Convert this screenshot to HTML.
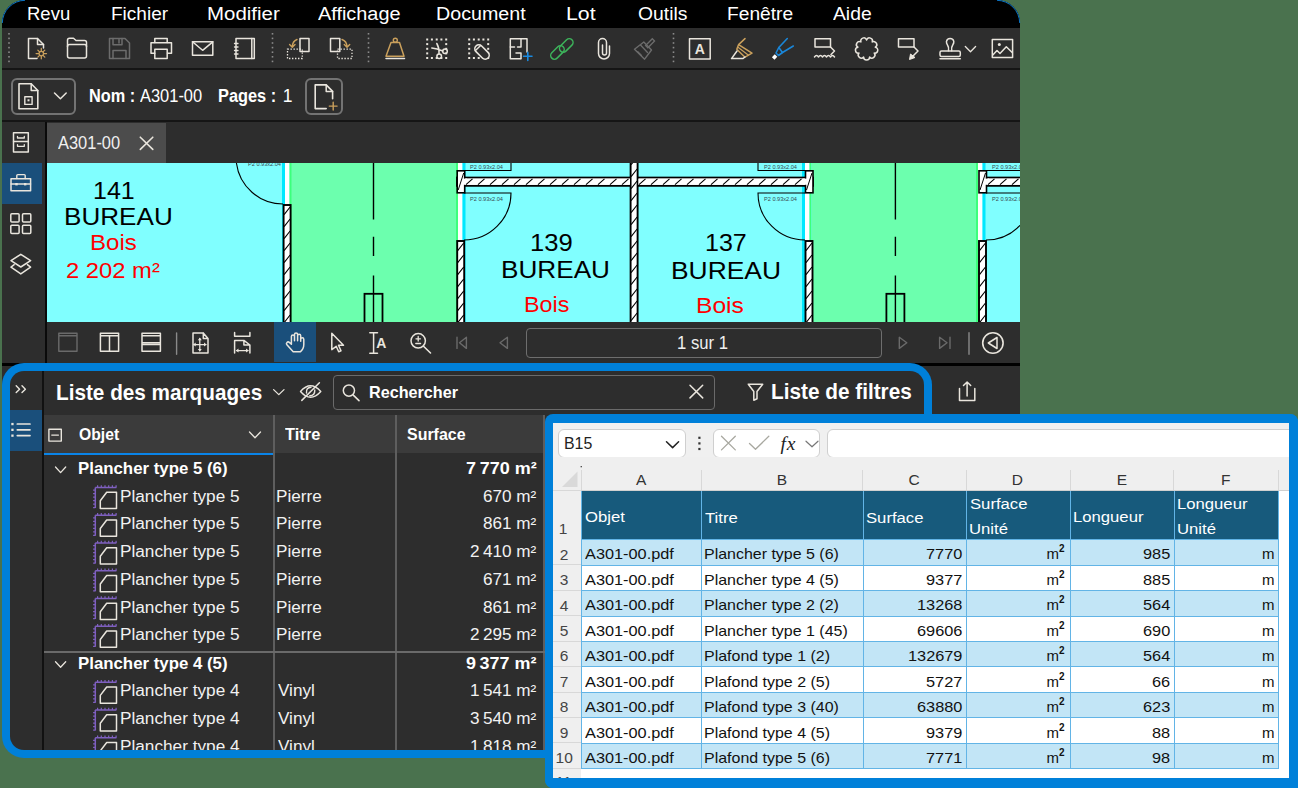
<!DOCTYPE html>
<html><head><meta charset="utf-8"><style>
html,body{margin:0;padding:0;}
body{width:1298px;height:788px;position:relative;overflow:hidden;background:#4a724e;font-family:"Liberation Sans",sans-serif;}
.r{position:absolute;}
.t{position:absolute;white-space:nowrap;line-height:1;}
svg{position:absolute;overflow:visible;}
</style></head><body>
<div class="r" style="left:2px;top:0;width:1018px;height:420px;background:#2d2d2d;border-radius:23px 23px 0 0;overflow:hidden">
<div class="r" style="left:0;top:0;width:1018px;height:28px;background:#000"></div>
</div>
<svg style="left:0;top:0" width="1298" height="40" viewBox="0 0 1298 40"><path d="M2.3 23A23 23 0 0 1 25 0.3M997 0.3A23 23 0 0 1 1019.7 23" fill="none" stroke="#0a7fdc" stroke-width="1" opacity="0.9"/></svg>
<div class="r" style="left:2px;top:68px;width:1018px;height:2px;background:#151515;"></div>
<div class="r" style="left:2px;top:120px;width:1018px;height:2px;background:#151515;"></div>
<div class="r" style="left:44.5px;top:122px;width:2.6px;height:241px;background:#0a0a0a;"></div>
<div class="r" style="left:47px;top:123px;width:119px;height:40px;background:#4c4c4c;"></div>
<div class="r" style="left:2px;top:163px;width:40px;height:41px;background:#1a4f7b;"></div>
<div class="r" style="left:274px;top:322px;width:42px;height:40px;background:#1a4f7b;"></div>
<div class="r" style="left:2px;top:363px;width:1018px;height:3px;background:#000;"></div>
<div class="t" id="t1" style="top:5.15px;font-size:18.00px;font-weight:400;color:#fff;left:27.17px;transform:scaleX(1.0272);transform-origin:0 0;">Revu</div>
<div class="t" id="t2" style="top:5.15px;font-size:18.00px;font-weight:400;color:#fff;left:110.94px;transform:scaleX(1.0563);transform-origin:0 0;">Fichier</div>
<div class="t" id="t3" style="top:5.15px;font-size:18.00px;font-weight:400;color:#fff;left:206.86px;transform:scaleX(1.1361);transform-origin:0 0;">Modifier</div>
<div class="t" id="t4" style="top:5.15px;font-size:18.00px;font-weight:400;color:#fff;left:318.00px;transform:scaleX(1.1042);transform-origin:0 0;">Affichage</div>
<div class="t" id="t5" style="top:5.15px;font-size:18.00px;font-weight:400;color:#fff;left:436.41px;transform:scaleX(1.0921);transform-origin:0 0;">Document</div>
<div class="t" id="t6" style="top:5.15px;font-size:18.00px;font-weight:400;color:#fff;left:566.42px;transform:scaleX(1.1823);transform-origin:0 0;">Lot</div>
<div class="t" id="t7" style="top:5.15px;font-size:18.00px;font-weight:400;color:#fff;left:638.00px;transform:scaleX(1.0737);transform-origin:0 0;">Outils</div>
<div class="t" id="t8" style="top:5.15px;font-size:18.00px;font-weight:400;color:#fff;left:726.93px;transform:scaleX(1.0652);transform-origin:0 0;">Fenêtre</div>
<div class="t" id="t9" style="top:5.15px;font-size:18.00px;font-weight:400;color:#fff;left:833.40px;transform:scaleX(1.0718);transform-origin:0 0;">Aide</div>
<div class="r" style="left:11px;top:78px;width:62px;height:35px;border:2px solid #737373;border-radius:6px;box-sizing:border-box;width:64.5px;height:37px"></div>
<div class="r" style="left:305px;top:78px;width:38px;height:36.5px;border:2px solid #737373;border-radius:6px;box-sizing:border-box"></div>
<div class="t" id="t10" style="top:88.38px;font-size:17.50px;font-weight:700;color:#fff;left:89.07px;transform:scaleX(0.9319);transform-origin:0 0;">Nom :</div>
<div class="t" id="t11" style="top:88.38px;font-size:17.50px;font-weight:400;color:#fff;left:140.30px;transform:scaleX(0.9393);transform-origin:0 0;">A301-00</div>
<div class="t" id="t12" style="top:88.38px;font-size:17.50px;font-weight:700;color:#fff;left:218.06px;transform:scaleX(0.9351);transform-origin:0 0;">Pages :</div>
<div class="t" id="t13" style="top:88.38px;font-size:17.50px;font-weight:400;color:#fff;left:282.80px;">1</div>
<div class="t" id="t14" style="top:134.78px;font-size:17.50px;font-weight:400;color:#f0f0f0;left:58.30px;transform:scaleX(0.9393);transform-origin:0 0;">A301-00</div>
<div class="r" style="left:526px;top:328px;width:356px;height:30px;border:1.6px solid #6e6e6e;border-radius:4px;box-sizing:border-box"></div>
<div class="t" id="t15" style="top:334.78px;font-size:17.50px;font-weight:400;color:#f0f0f0;left:677.25px;transform:scaleX(0.9523);transform-origin:0 0;">1 sur 1</div>
<svg style="left:0;top:28px" width="1020" height="40" viewBox="0 28 1020 40"><rect x="8.2" y="33.0" width="1.6" height="1.6" fill="#8a8a8a"/><rect x="8.2" y="37.6" width="1.6" height="1.6" fill="#8a8a8a"/><rect x="8.2" y="42.2" width="1.6" height="1.6" fill="#8a8a8a"/><rect x="8.2" y="46.8" width="1.6" height="1.6" fill="#8a8a8a"/><rect x="8.2" y="51.4" width="1.6" height="1.6" fill="#8a8a8a"/><rect x="8.2" y="56.0" width="1.6" height="1.6" fill="#8a8a8a"/><rect x="8.2" y="60.6" width="1.6" height="1.6" fill="#8a8a8a"/><rect x="271.7" y="33.0" width="1.6" height="1.6" fill="#8a8a8a"/><rect x="271.7" y="37.6" width="1.6" height="1.6" fill="#8a8a8a"/><rect x="271.7" y="42.2" width="1.6" height="1.6" fill="#8a8a8a"/><rect x="271.7" y="46.8" width="1.6" height="1.6" fill="#8a8a8a"/><rect x="271.7" y="51.4" width="1.6" height="1.6" fill="#8a8a8a"/><rect x="271.7" y="56.0" width="1.6" height="1.6" fill="#8a8a8a"/><rect x="271.7" y="60.6" width="1.6" height="1.6" fill="#8a8a8a"/><rect x="367.7" y="33.0" width="1.6" height="1.6" fill="#8a8a8a"/><rect x="367.7" y="37.6" width="1.6" height="1.6" fill="#8a8a8a"/><rect x="367.7" y="42.2" width="1.6" height="1.6" fill="#8a8a8a"/><rect x="367.7" y="46.8" width="1.6" height="1.6" fill="#8a8a8a"/><rect x="367.7" y="51.4" width="1.6" height="1.6" fill="#8a8a8a"/><rect x="367.7" y="56.0" width="1.6" height="1.6" fill="#8a8a8a"/><rect x="367.7" y="60.6" width="1.6" height="1.6" fill="#8a8a8a"/><rect x="672.7" y="33.0" width="1.6" height="1.6" fill="#8a8a8a"/><rect x="672.7" y="37.6" width="1.6" height="1.6" fill="#8a8a8a"/><rect x="672.7" y="42.2" width="1.6" height="1.6" fill="#8a8a8a"/><rect x="672.7" y="46.8" width="1.6" height="1.6" fill="#8a8a8a"/><rect x="672.7" y="51.4" width="1.6" height="1.6" fill="#8a8a8a"/><rect x="672.7" y="56.0" width="1.6" height="1.6" fill="#8a8a8a"/><rect x="672.7" y="60.6" width="1.6" height="1.6" fill="#8a8a8a"/><path d="M37 58.5H28.5V38.5H37.5L43.5 44.5V48" fill="none" stroke="#e9e5dd" stroke-width="1.5" stroke-linejoin="round" stroke-linecap="round" /><path d="M37.5 38.5V44.5H43.5" fill="none" stroke="#e9e5dd" stroke-width="1.5" stroke-linejoin="round" stroke-linecap="round" /><path d="M41.3 48.4V58.8M36.1 53.6H46.5M37.8 50.1L44.8 57.1M37.8 57.1L44.8 50.1" fill="none" stroke="#caa05c" stroke-width="1.3" stroke-linejoin="round" stroke-linecap="round" /><circle cx="41.3" cy="53.6" r="2.2" fill="#2d2d2d" stroke="#caa05c" stroke-width="1.2"/><path d="M69.5 58H84.5Q86.5 58 86.5 56V42.5Q86.5 40.5 84.5 40.5H76L73.5 38.3H69.5Q67.5 38.3 67.5 40.3V56Q67.5 58 69.5 58Z" fill="none" stroke="#e9e5dd" stroke-width="1.5" stroke-linejoin="round" stroke-linecap="round" /><path d="M67.5 46.5Q67.5 44.5 69.5 44.5H84.5Q86.5 44.5 86.5 46.5" fill="none" stroke="#e9e5dd" stroke-width="1.5" stroke-linejoin="round" stroke-linecap="round" /><path d="M109.5 58.5V38.5H125L129.5 43V58.5Z" fill="none" stroke="#6c6c6c" stroke-width="1.5" stroke-linejoin="round" stroke-linecap="round" /><path d="M113 38.5V44.8H122V38.5M119 39.5V43M113 58.5V50.5H126V58.5" fill="none" stroke="#6c6c6c" stroke-width="1.5" stroke-linejoin="round" stroke-linecap="round" /><path d="M154.8 42.5V38.5H167.2V42.5" fill="none" stroke="#e9e5dd" stroke-width="1.5" stroke-linejoin="round" stroke-linecap="round" /><path d="M154.8 53.2H151V42.8H171.5V53.2H167.5" fill="none" stroke="#e9e5dd" stroke-width="1.5" stroke-linejoin="round" stroke-linecap="round" /><path d="M154.8 49.3H167.2V58.5H154.8Z" fill="none" stroke="#e9e5dd" stroke-width="1.5" stroke-linejoin="round" stroke-linecap="round" /><path d="M192.5 41.8H212.8V55.3H192.5Z" fill="none" stroke="#e9e5dd" stroke-width="1.5" stroke-linejoin="round" stroke-linecap="round" /><path d="M192.5 41.8L202.6 50.3L212.8 41.8" fill="none" stroke="#e9e5dd" stroke-width="1.5" stroke-linejoin="round" stroke-linecap="round" /><path d="M236 38.5H254.3V58.5H236Z" fill="none" stroke="#e9e5dd" stroke-width="1.5" stroke-linejoin="round" stroke-linecap="round" /><path d="M251.8 38.5V58.5" fill="none" stroke="#e9e5dd" stroke-width="1.5" stroke-linejoin="round" stroke-linecap="round" /><path d="M234.5 43.5H238" fill="none" stroke="#e9e5dd" stroke-width="1.3" stroke-linejoin="round" stroke-linecap="round" /><path d="M234.5 47.0H238" fill="none" stroke="#e9e5dd" stroke-width="1.3" stroke-linejoin="round" stroke-linecap="round" /><path d="M234.5 50.5H238" fill="none" stroke="#e9e5dd" stroke-width="1.3" stroke-linejoin="round" stroke-linecap="round" /><path d="M234.5 54.0H238" fill="none" stroke="#e9e5dd" stroke-width="1.3" stroke-linejoin="round" stroke-linecap="round" /><path d="M300 38.5H309V51.5H300Z" fill="none" stroke="#e9e5dd" stroke-width="1.5" stroke-linejoin="round" stroke-linecap="round" /><path d="M287.5 49.2H302.3V58.5H287.5Z" fill="none" stroke="#e9e5dd" stroke-width="1.3" stroke-dasharray="1.4 1.6"/><path d="M297 39.5Q292.5 41 292.3 47M289.6 44.5L292.3 47.3L295 44.5" fill="none" stroke="#caa05c" stroke-width="1.4" stroke-linejoin="round" stroke-linecap="round" /><path d="M330.5 38.5H339.8V51.5H330.5Z" fill="none" stroke="#e9e5dd" stroke-width="1.5" stroke-linejoin="round" stroke-linecap="round" /><path d="M337.5 49.2H352V58.5H337.5Z" fill="none" stroke="#e9e5dd" stroke-width="1.3" stroke-dasharray="1.4 1.6"/><path d="M342 39.5Q346.8 41 347 47M344.3 44.5L347 47.3L349.7 44.5" fill="none" stroke="#caa05c" stroke-width="1.4" stroke-linejoin="round" stroke-linecap="round" /><path d="M391 42.5H399.5L404 56.3H386Z" fill="none" stroke="#caa05c" stroke-width="1.5" stroke-linejoin="round" stroke-linecap="round" /><circle cx="395.3" cy="40.3" r="2" fill="none" stroke="#caa05c" stroke-width="1.4"/><path d="M386 58.6H404.5" fill="none" stroke="#e9e5dd" stroke-width="1.5" stroke-linejoin="round" stroke-linecap="round" /><rect x="426.2" y="38.5" width="2" height="2" fill="#e9e5dd"/><rect x="426.2" y="57.0" width="2" height="2" fill="#e9e5dd"/><rect x="430.9" y="38.5" width="2" height="2" fill="#e9e5dd"/><rect x="430.9" y="57.0" width="2" height="2" fill="#e9e5dd"/><rect x="435.7" y="38.5" width="2" height="2" fill="#e9e5dd"/><rect x="435.7" y="57.0" width="2" height="2" fill="#e9e5dd"/><rect x="440.4" y="38.5" width="2" height="2" fill="#e9e5dd"/><rect x="440.4" y="57.0" width="2" height="2" fill="#e9e5dd"/><rect x="445.2" y="38.5" width="2" height="2" fill="#e9e5dd"/><rect x="445.2" y="57.0" width="2" height="2" fill="#e9e5dd"/><rect x="426.2" y="43.1" width="2" height="2" fill="#e9e5dd"/><rect x="445.2" y="43.1" width="2" height="2" fill="#e9e5dd"/><rect x="426.2" y="47.8" width="2" height="2" fill="#e9e5dd"/><rect x="445.2" y="47.8" width="2" height="2" fill="#e9e5dd"/><rect x="426.2" y="52.4" width="2" height="2" fill="#e9e5dd"/><rect x="445.2" y="52.4" width="2" height="2" fill="#e9e5dd"/><path d="M436.8 43.5Q439.5 48 439 53.8M431.8 48Q437 48.5 442.8 51" fill="none" stroke="#e9e5dd" stroke-width="1.5" stroke-linejoin="round" stroke-linecap="round" /><circle cx="439.2" cy="56.3" r="2.3" fill="none" stroke="#e9e5dd" stroke-width="1.5"/><circle cx="445" cy="51.3" r="2.3" fill="none" stroke="#e9e5dd" stroke-width="1.5"/><rect x="468.2" y="38.5" width="2" height="2" fill="#e9e5dd"/><rect x="468.2" y="57.0" width="2" height="2" fill="#e9e5dd"/><rect x="472.9" y="38.5" width="2" height="2" fill="#e9e5dd"/><rect x="472.9" y="57.0" width="2" height="2" fill="#e9e5dd"/><rect x="477.7" y="38.5" width="2" height="2" fill="#e9e5dd"/><rect x="477.7" y="57.0" width="2" height="2" fill="#e9e5dd"/><rect x="482.4" y="38.5" width="2" height="2" fill="#e9e5dd"/><rect x="482.4" y="57.0" width="2" height="2" fill="#e9e5dd"/><rect x="487.2" y="38.5" width="2" height="2" fill="#e9e5dd"/><rect x="487.2" y="57.0" width="2" height="2" fill="#e9e5dd"/><rect x="468.2" y="43.1" width="2" height="2" fill="#e9e5dd"/><rect x="487.2" y="43.1" width="2" height="2" fill="#e9e5dd"/><rect x="468.2" y="47.8" width="2" height="2" fill="#e9e5dd"/><rect x="487.2" y="47.8" width="2" height="2" fill="#e9e5dd"/><rect x="468.2" y="52.4" width="2" height="2" fill="#e9e5dd"/><rect x="487.2" y="52.4" width="2" height="2" fill="#e9e5dd"/><rect x="473.5" y="48" width="17" height="8" rx="4" transform="rotate(45 482 52)" fill="#2d2d2d" stroke="#e9e5dd" stroke-width="1.6"/><path d="M475.2 50.8L480.6 45.4" fill="none" stroke="#e9e5dd" stroke-width="1.4" stroke-linejoin="round" stroke-linecap="round" /><path d="M527 52V38.8H510.3V58.8H520.5" fill="none" stroke="#e9e5dd" stroke-width="1.5" stroke-linejoin="round" stroke-linecap="round" /><path d="M510.3 47H514.5M517.5 47H521V38.8M516 53H521M521 53V58.8" fill="none" stroke="#e9e5dd" stroke-width="1.5" stroke-linejoin="round" stroke-linecap="round" /><path d="M527.8 52.2V60.5M523.6 56.3H532" fill="none" stroke="#1a8ae0" stroke-width="1.6" stroke-linejoin="round" stroke-linecap="round" /><rect x="562.5" y="37.5" width="7.5" height="16" rx="3.75" transform="rotate(45 566.3 45.5)" fill="none" stroke="#3db35b" stroke-width="1.5"/><rect x="553.7" y="44.5" width="7.5" height="16" rx="3.75" transform="rotate(45 557.5 52.5)" fill="none" stroke="#3db35b" stroke-width="1.5"/><path d="M609.5 46V53.5A5.5 5.5 0 0 1 598.5 53.5V42.5A4 4 0 0 1 606.5 42.5V53A2 2 0 0 1 602.5 53V45" fill="none" stroke="#e9e5dd" stroke-width="1.5" stroke-linejoin="round" stroke-linecap="round" /><path d="M634.5 49.2L643.8 42L651.5 50L644.6 59.2Z" fill="none" stroke="#6c6c6c" stroke-width="1.4" stroke-linejoin="round" stroke-linecap="round" /><path d="M640.5 45L647.5 52.5M637.8 51.8L641.5 55.5" fill="none" stroke="#6c6c6c" stroke-width="1.3" stroke-linejoin="round" stroke-linecap="round" /><rect x="648.5" y="38.5" width="3.2" height="9.5" transform="rotate(45 650.1 43.2)" fill="none" stroke="#6c6c6c" stroke-width="1.3"/><path d="M689.5 38.8H710.2V59H689.5Z" fill="none" stroke="#e9e5dd" stroke-width="1.5" stroke-linejoin="round" stroke-linecap="round" /><text x="699.8" y="53.6" font-size="14" font-family="Liberation Sans" font-weight="700" fill="#e9e5dd" text-anchor="middle">A</text><path d="M745 38.6L738.6 44.6L752 53.2L745 57.2L736.8 49.2L738.6 44.6" fill="none" stroke="#caa05c" stroke-width="1.5" stroke-linejoin="round" stroke-linecap="round" /><path d="M738 47.2L748.5 55.2" fill="none" stroke="#caa05c" stroke-width="1.2" stroke-linejoin="round" stroke-linecap="round" /><path d="M737 51L731.5 58.6H742.8L745 57" fill="none" stroke="#e9e5dd" stroke-width="1.5" stroke-linejoin="round" stroke-linecap="round" /><path d="M787.3 38.5L778.8 47.5L782.5 52.5L793.3 46" fill="none" stroke="#1a86d8" stroke-width="1.6" stroke-linejoin="round" stroke-linecap="round" /><path d="M778.8 47.5L776 53L778.5 55.5L782.5 52.5" fill="none" stroke="#1a86d8" stroke-width="1.6" stroke-linejoin="round" stroke-linecap="round" /><rect x="772.8" y="55" width="3.6" height="4" transform="rotate(45 774.6 57)" fill="#fff"/><path d="M815 38.8H830.5V47H815Z" fill="none" stroke="#e9e5dd" stroke-width="1.5" stroke-linejoin="round" stroke-linecap="round" /><path d="M830.5 47L834.5 51L831 54.5" fill="none" stroke="#e9e5dd" stroke-width="1.5" stroke-linejoin="round" stroke-linecap="round" /><path d="M814.5 57Q816.5 54 818.5 57Q820.5 54 822.5 57Q824.5 54 826.5 57Q828.5 54 830.5 57Q832.5 54 834.5 57" fill="none" stroke="#e9e5dd" stroke-width="1.5" stroke-linejoin="round" stroke-linecap="round" /><path d="M866.60 39.90A2.9 2.9 0 0 1 872.26 41.96A2.9 2.9 0 0 1 875.27 47.17A2.9 2.9 0 0 1 874.22 53.10A2.9 2.9 0 0 1 869.61 56.97A2.9 2.9 0 0 1 863.59 56.97A2.9 2.9 0 0 1 858.98 53.10A2.9 2.9 0 0 1 857.93 47.17A2.9 2.9 0 0 1 860.94 41.96A2.9 2.9 0 0 1 866.60 39.90" fill="none" stroke="#e9e5dd" stroke-width="1.5" stroke-linejoin="round" stroke-linecap="round" /><path d="M898.5 38.8H914V47H898.5Z" fill="none" stroke="#e9e5dd" stroke-width="1.5" stroke-linejoin="round" stroke-linecap="round" /><path d="M914 47L918 51L911 58" fill="none" stroke="#e9e5dd" stroke-width="1.5" stroke-linejoin="round" stroke-linecap="round" /><path d="M909.5 59.5L910.5 54L915 57.5Z" fill="#e9e5dd" stroke="#e9e5dd" stroke-width="1"/><path d="M948.5 50.8Q949 47 947.5 45Q946.2 43 946.5 41.5Q947 38.5 950.1 38.5Q953.3 38.5 953.8 41.5Q954 43 952.7 45Q951.2 47 951.7 50.8" fill="none" stroke="#e9e5dd" stroke-width="1.5" stroke-linejoin="round" stroke-linecap="round" /><path d="M941.5 51H958.8Q960.3 51 960.3 52.5V55Q960.3 56.5 958.8 56.5H941.5Q940 56.5 940 55V52.5Q940 51 941.5 51Z" fill="none" stroke="#e9e5dd" stroke-width="1.5" stroke-linejoin="round" stroke-linecap="round" /><path d="M940 58.8H960.3" fill="none" stroke="#e9e5dd" stroke-width="1.5" stroke-linejoin="round" stroke-linecap="round" /><path d="M965.3 46.5L970.5 51.8L975.6 46.5" fill="none" stroke="#e9e5dd" stroke-width="1.3" stroke-linejoin="round" stroke-linecap="round" /><path d="M992.3 39.5H1012.6V57.6H992.3Z" fill="none" stroke="#e9e5dd" stroke-width="1.5" stroke-linejoin="round" stroke-linecap="round" /><circle cx="999.3" cy="44.6" r="1.5" fill="#e9e5dd"/><path d="M992.8 55L997 50.5L1000 53.5L1006.3 46.8L1012.2 52.5" fill="none" stroke="#e9e5dd" stroke-width="1.5" stroke-linejoin="round" stroke-linecap="round" /></svg>
<svg style="left:47px;top:163px;overflow:hidden" width="973" height="159" viewBox="47 163 973 159"><rect x="47" y="163" width="973" height="159" fill="#80ffff"/><rect x="291" y="163" width="166" height="159" fill="#6cffae"/><rect x="812" y="163" width="166" height="159" fill="#6cffae"/><rect x="282.0" y="163" width="3.0" height="159" fill="#00e8ff"/><rect x="285.0" y="163" width="4.5" height="159" fill="#ffffff"/><rect x="289.5" y="163" width="2.0" height="159" fill="#3cff7c"/><rect x="456.0" y="163" width="2.0" height="159" fill="#3cff7c"/><rect x="458.0" y="163" width="4.5" height="159" fill="#ffffff"/><rect x="462.5" y="163" width="3.0" height="159" fill="#00e8ff"/><rect x="802.0" y="163" width="3.0" height="159" fill="#00e8ff"/><rect x="805.0" y="163" width="4.5" height="159" fill="#ffffff"/><rect x="809.5" y="163" width="2.0" height="159" fill="#3cff7c"/><rect x="976.0" y="163" width="2.0" height="159" fill="#3cff7c"/><rect x="978.0" y="163" width="4.5" height="159" fill="#ffffff"/><rect x="982.5" y="163" width="3.0" height="159" fill="#00e8ff"/><rect x="457.0" y="177.6" width="356.0" height="8.2" fill="#fff" stroke="#000" stroke-width="1.9"/><path d="" stroke="#000" stroke-width="1.1" fill="none"/><rect x="987.0" y="177.6" width="40.0" height="8.2" fill="#fff" stroke="#000" stroke-width="1.9"/><path d="" stroke="#000" stroke-width="1.1" fill="none"/><rect x="283.6" y="205.0" width="7.0" height="130.0" fill="#fff" stroke="#000" stroke-width="1.9"/><path d="M284.1 214.7L290.1 207.0M284.1 226.7L290.1 219.0M284.1 238.7L290.1 231.0M284.1 250.7L290.1 243.0M284.1 262.7L290.1 255.0M284.1 274.7L290.1 267.0M284.1 286.7L290.1 279.0M284.1 298.7L290.1 291.0M284.1 310.7L290.1 303.0M284.1 322.7L290.1 315.0M284.1 334.7L290.1 327.0" stroke="#000" stroke-width="1.1" fill="none"/><rect x="457.2" y="241.0" width="7.0" height="100.0" fill="#fff" stroke="#000" stroke-width="1.9"/><path d="M457.7 250.7L463.7 243.0M457.7 262.7L463.7 255.0M457.7 274.7L463.7 267.0M457.7 286.7L463.7 279.0M457.7 298.7L463.7 291.0M457.7 310.7L463.7 303.0M457.7 322.7L463.7 315.0M457.7 334.7L463.7 327.0M457.7 346.7L463.7 339.0" stroke="#000" stroke-width="1.1" fill="none"/><rect x="630.6" y="155.0" width="7.0" height="180.0" fill="#fff" stroke="#000" stroke-width="1.9"/><path d="M631.1 164.7L637.1 157.0M631.1 176.7L637.1 169.0M631.1 188.7L637.1 181.0M631.1 200.7L637.1 193.0M631.1 212.7L637.1 205.0M631.1 224.7L637.1 217.0M631.1 236.7L637.1 229.0M631.1 248.7L637.1 241.0M631.1 260.7L637.1 253.0M631.1 272.7L637.1 265.0M631.1 284.7L637.1 277.0M631.1 296.7L637.1 289.0M631.1 308.7L637.1 301.0M631.1 320.7L637.1 313.0M631.1 332.7L637.1 325.0" stroke="#000" stroke-width="1.1" fill="none"/><rect x="805.5" y="241.0" width="7.0" height="100.0" fill="#fff" stroke="#000" stroke-width="1.9"/><path d="M806.0 250.7L812.0 243.0M806.0 262.7L812.0 255.0M806.0 274.7L812.0 267.0M806.0 286.7L812.0 279.0M806.0 298.7L812.0 291.0M806.0 310.7L812.0 303.0M806.0 322.7L812.0 315.0M806.0 334.7L812.0 327.0M806.0 346.7L812.0 339.0" stroke="#000" stroke-width="1.1" fill="none"/><rect x="979.0" y="241.0" width="7.0" height="100.0" fill="#fff" stroke="#000" stroke-width="1.9"/><path d="M979.5 250.7L985.5 243.0M979.5 262.7L985.5 255.0M979.5 274.7L985.5 267.0M979.5 286.7L985.5 279.0M979.5 298.7L985.5 291.0M979.5 310.7L985.5 303.0M979.5 322.7L985.5 315.0M979.5 334.7L985.5 327.0M979.5 346.7L985.5 339.0" stroke="#000" stroke-width="1.1" fill="none"/><rect x="457.2" y="170.8" width="7.5" height="22" fill="#fff" stroke="#000" stroke-width="1.6"/><path d="M463.7 173L458.2 190" stroke="#000" stroke-width="1"/><rect x="805.5" y="170.8" width="7.5" height="22" fill="#fff" stroke="#000" stroke-width="1.6"/><path d="M812.0 173L806.5 190" stroke="#000" stroke-width="1"/><rect x="979.0" y="170.8" width="7.5" height="22" fill="#fff" stroke="#000" stroke-width="1.6"/><path d="M985.5 173L980.0 190" stroke="#000" stroke-width="1"/><rect x="465" y="178.6" width="165" height="6.2" fill="#fff"/><rect x="638.5" y="178.6" width="166.5" height="6.2" fill="#fff"/><rect x="987" y="178.6" width="40" height="6.2" fill="#fff"/><rect x="463" y="178.6" width="4" height="6.2" fill="#fff"/><rect x="803" y="178.6" width="4" height="6.2" fill="#fff"/><rect x="985" y="178.6" width="4" height="6.2" fill="#fff"/><path d="M466.0 184.6L472.5 178.8M478.0 184.6L484.5 178.8M490.0 184.6L496.5 178.8M502.0 184.6L508.5 178.8M514.0 184.6L520.5 178.8M526.0 184.6L532.5 178.8M538.0 184.6L544.5 178.8M550.0 184.6L556.5 178.8M562.0 184.6L568.5 178.8M574.0 184.6L580.5 178.8M586.0 184.6L592.5 178.8M598.0 184.6L604.5 178.8M610.0 184.6L616.5 178.8M622.0 184.6L628.5 178.8M639.0 184.6L645.5 178.8M651.0 184.6L657.5 178.8M663.0 184.6L669.5 178.8M675.0 184.6L681.5 178.8M687.0 184.6L693.5 178.8M699.0 184.6L705.5 178.8M711.0 184.6L717.5 178.8M723.0 184.6L729.5 178.8M735.0 184.6L741.5 178.8M747.0 184.6L753.5 178.8M759.0 184.6L765.5 178.8M771.0 184.6L777.5 178.8M783.0 184.6L789.5 178.8M795.0 184.6L801.5 178.8M988.0 184.6L994.5 178.8M1000.0 184.6L1006.5 178.8M1012.0 184.6L1018.5 178.8" stroke="#000" stroke-width="1.1"/><path d="M236.4 163A47 47 0 0 0 283 204" fill="none" stroke="#000" stroke-width="1.1"/><path d="M464 193H511A47 47 0 0 1 464 240" fill="none" stroke="#000" stroke-width="1.1"/><path d="M805 193H758A47 47 0 0 0 805 240" fill="none" stroke="#000" stroke-width="1.1"/><path d="M986 193H1033A47 47 0 0 1 986 240" fill="none" stroke="#000" stroke-width="1.1"/><path d="M464 170.5H511V163M805 170.5H758V163M986 170.5H1030" fill="none" stroke="#000" stroke-width="1.1"/><text x="470" y="169" font-size="5.6" fill="#3a4a50" font-family="Liberation Sans">P2 0.93x2.04</text><text x="470" y="201" font-size="5.6" fill="#3a4a50" font-family="Liberation Sans">P2 0.93x2.04</text><text x="764" y="169" font-size="5.6" fill="#3a4a50" font-family="Liberation Sans">P2 0.93x2.04</text><text x="764" y="201" font-size="5.6" fill="#3a4a50" font-family="Liberation Sans">P2 0.93x2.04</text><text x="992" y="169" font-size="5.6" fill="#3a4a50" font-family="Liberation Sans">P2 0.93x2.04</text><text x="992" y="201" font-size="5.6" fill="#3a4a50" font-family="Liberation Sans">P2 0.93x2.04</text><text x="248" y="166" font-size="5.6" fill="#3a4a50" font-family="Liberation Sans">P2 0.93x2.04</text><path d="M373.5 163V219.5M373.5 236.8V256M373.5 275.5V322" stroke="#000" stroke-width="1.4"/><rect x="364.5" y="293.8" width="18" height="30" fill="none" stroke="#000" stroke-width="1.8"/><path d="M895.4 163V219.5M895.4 236.8V256M895.4 275.5V322" stroke="#000" stroke-width="1.4"/><rect x="886.4" y="293.8" width="18" height="30" fill="none" stroke="#000" stroke-width="1.8"/></svg>
<div class="t" id="t16" style="top:178.75px;font-size:24.50px;font-weight:400;color:#000;left:93.38px;transform:scaleX(1.0191);transform-origin:0 0;">141</div>
<div class="t" id="t17" style="top:205.05px;font-size:24.50px;font-weight:400;color:#000;left:64.07px;transform:scaleX(1.0649);transform-origin:0 0;">BUREAU</div>
<div class="t" id="t18" style="top:232.24px;font-size:22.50px;font-weight:400;color:#f00;left:89.53px;transform:scaleX(1.0677);transform-origin:0 0;">Bois</div>
<div class="t" id="t19" style="top:260.04px;font-size:22.50px;font-weight:400;color:#f00;left:65.64px;transform:scaleX(1.0566);transform-origin:0 0;">2 202 m²</div>
<div class="t" id="t20" style="top:230.55px;font-size:24.50px;font-weight:400;color:#000;left:529.96px;transform:scaleX(1.0445);transform-origin:0 0;">139</div>
<div class="t" id="t21" style="top:257.65px;font-size:24.50px;font-weight:400;color:#000;left:500.87px;transform:scaleX(1.0670);transform-origin:0 0;">BUREAU</div>
<div class="t" id="t22" style="top:294.44px;font-size:22.50px;font-weight:400;color:#f00;left:523.66px;transform:scaleX(1.0372);transform-origin:0 0;">Bois</div>
<div class="t" id="t23" style="top:231.05px;font-size:24.50px;font-weight:400;color:#000;left:704.58px;transform:scaleX(1.0216);transform-origin:0 0;">137</div>
<div class="t" id="t24" style="top:258.85px;font-size:24.50px;font-weight:400;color:#000;left:671.45px;transform:scaleX(1.0771);transform-origin:0 0;">BUREAU</div>
<div class="t" id="t25" style="top:294.74px;font-size:22.50px;font-weight:400;color:#f00;left:695.91px;transform:scaleX(1.0936);transform-origin:0 0;">Bois</div>
<svg style="left:0;top:0" width="1298" height="788" viewBox="0 0 1298 788"><path d="M19 83.8H31.2L37.8 90.5V108.7H19Z" fill="none" stroke="#e9e5dd" stroke-width="1.6" stroke-linejoin="round" stroke-linecap="round" /><path d="M31.2 83.8V90.5H37.8" fill="none" stroke="#e9e5dd" stroke-width="1.5" stroke-linejoin="round" stroke-linecap="round" /><path d="M24.8 96.7H32.1V104.4H24.8Z" fill="none" stroke="#e9e5dd" stroke-width="1.4" stroke-linejoin="round" stroke-linecap="round" /><rect x="27.5" y="99.3" width="2" height="2" fill="#e9e5dd"/><path d="M54.5 93L60.4 98.8L66.2 93" fill="none" stroke="#e9e5dd" stroke-width="1.5" stroke-linejoin="round" stroke-linecap="round" /><path d="M326.2 108.6H315.2V84.9H326.2L332.6 91.4V98.8" fill="none" stroke="#e9e5dd" stroke-width="1.6" stroke-linejoin="round" stroke-linecap="round" /><path d="M326.2 84.9V91.4H332.6" fill="none" stroke="#e9e5dd" stroke-width="1.5" stroke-linejoin="round" stroke-linecap="round" /><path d="M333.2 102.3V110M329.3 106.1H337.1" fill="none" stroke="#caa05c" stroke-width="1.4" stroke-linejoin="round" stroke-linecap="round" /><path d="M140.3 137.2L152.8 149.4M152.8 137.2L140.3 149.4" fill="none" stroke="#e9e5dd" stroke-width="1.6" stroke-linejoin="round" stroke-linecap="round" /><path d="M13.5 132.8H28.3V152H13.5Z" fill="none" stroke="#e9e5dd" stroke-width="1.5" stroke-linejoin="round" stroke-linecap="round" /><path d="M13.5 141.5H28.3" fill="none" stroke="#e9e5dd" stroke-width="1.4" stroke-linejoin="round" stroke-linecap="round" /><path d="M17.5 136.3V138H24.3V136.3M17.5 144.6V146.3H24.3V144.6" fill="none" stroke="#e9e5dd" stroke-width="1.3" stroke-linejoin="round" stroke-linecap="round" /><path d="M11 178.8H30.6V190.7H11Z" fill="none" stroke="#e9e5dd" stroke-width="1.5" stroke-linejoin="round" stroke-linecap="round" /><path d="M11 184H30.6" fill="none" stroke="#e9e5dd" stroke-width="1.3" stroke-linejoin="round" stroke-linecap="round" /><path d="M16.8 178.5V175.6Q16.8 174.6 17.8 174.6H24.2Q25.2 174.6 25.2 175.6V178.5" fill="none" stroke="#e9e5dd" stroke-width="1.4" stroke-linejoin="round" stroke-linecap="round" /><rect x="15.3" y="183" width="2.4" height="2.4" fill="#e9e5dd"/><rect x="24" y="183" width="2.4" height="2.4" fill="#e9e5dd"/><rect x="10.8" y="213.8" width="8.3" height="8.3" rx="1" fill="none" stroke="#e9e5dd" stroke-width="1.5"/><rect x="22.5" y="213.8" width="8.3" height="8.3" rx="1" fill="none" stroke="#e9e5dd" stroke-width="1.5"/><rect x="10.8" y="225.3" width="8.3" height="8.3" rx="1" fill="none" stroke="#e9e5dd" stroke-width="1.5"/><rect x="22.5" y="225.3" width="8.3" height="8.3" rx="1" fill="none" stroke="#e9e5dd" stroke-width="1.5"/><path d="M20.8 254.3L30.6 260.6L20.8 267L11 260.6Z" fill="none" stroke="#e9e5dd" stroke-width="1.5" stroke-linejoin="round" stroke-linecap="round" /><path d="M14.2 264.7L11 267.2L20.8 273.9L30.6 267.2L27.4 264.7" fill="none" stroke="#e9e5dd" stroke-width="1.5" stroke-linejoin="round" stroke-linecap="round" /><path d="M58.8 333.3H77V351.3H58.8ZM58.8 335.8H77" fill="none" stroke="#6a6a6a" stroke-width="1.4" stroke-linejoin="round" stroke-linecap="round" /><path d="M100.4 333.3H118.6V351.3H100.4ZM100.4 335.8H118.6M109.5 335.8V351.3" fill="none" stroke="#e9e5dd" stroke-width="1.5" stroke-linejoin="round" stroke-linecap="round" /><path d="M142 333.3H160.4V351.3H142ZM142 335.8H160.4M142 342.8H160.4M142 344.6H160.4" fill="none" stroke="#e9e5dd" stroke-width="1.5" stroke-linejoin="round" stroke-linecap="round" /><path d="M176.6 333V354.3" fill="none" stroke="#8a8a8a" stroke-width="1.4" stroke-linejoin="round" stroke-linecap="round" /><path d="M203.3 333.1H193V352.9H208V338.6L203.3 333.1V338.6H208" fill="none" stroke="#e9e5dd" stroke-width="1.5" stroke-linejoin="round" stroke-linecap="round" /><path d="M199.8 338.5V350.8M193.8 344.6H206" fill="none" stroke="#e9e5dd" stroke-width="1.3" stroke-linejoin="round" stroke-linecap="round" /><path d="M199.8 337.8L197.8 340.3H201.8ZM199.8 351.4L197.8 348.9H201.8ZM193.2 344.6L195.7 342.6V346.6ZM206.5 344.6L204 342.6V346.6Z" fill="#e9e5dd"/><path d="M234.6 332.6V336.3H249.9V332.6" fill="none" stroke="#e9e5dd" stroke-width="1.5" stroke-linejoin="round" stroke-linecap="round" /><path d="M234.6 353V340.4H243.9L249.9 345V353M243.9 340.4V345H249.9" fill="none" stroke="#e9e5dd" stroke-width="1.5" stroke-linejoin="round" stroke-linecap="round" /><path d="M236.5 350.6H248" fill="none" stroke="#e9e5dd" stroke-width="1.3" stroke-linejoin="round" stroke-linecap="round" /><path d="M235.8 350.6L238.5 348.6V352.6ZM248.7 350.6L246 348.6V352.6Z" fill="#e9e5dd"/><path d="M293.2 351.8L286.9 344.8A1.7 1.7 0 0 1 289.3 342.4L291.4 344.3V336.6A1.55 1.55 0 0 1 294.5 336.6V340.8V334.6A1.55 1.55 0 0 1 297.6 334.6V340.8V335.8A1.55 1.55 0 0 1 300.7 335.8V341.2V339.4A1.55 1.55 0 0 1 303.8 339.4V344.5Q303.8 349 300.3 351.8Z" fill="none" stroke="#e9e5dd" stroke-width="1.5" stroke-linejoin="round" stroke-linecap="round" /><path d="M331.8 333.3L343.5 345.3H338.5L341 350.8L338.7 351.8L336.2 346.3L331.8 349.6Z" fill="none" stroke="#e9e5dd" stroke-width="1.5" stroke-linejoin="round" stroke-linecap="round" /><path d="M369.8 332.7H377.5M373.6 332.7V353.2M369.8 353.2H377.5" fill="none" stroke="#e9e5dd" stroke-width="1.5" stroke-linejoin="round" stroke-linecap="round" /><text x="381.3" y="347.8" font-size="14" font-weight="700" font-family="Liberation Sans" fill="#e9e5dd" text-anchor="middle">A</text><circle cx="418.2" cy="340.8" r="7.2" fill="none" stroke="#e9e5dd" stroke-width="1.5"/><path d="M423.5 346.2L430.5 353" fill="none" stroke="#e9e5dd" stroke-width="1.6" stroke-linejoin="round" stroke-linecap="round" /><path d="M418.2 336.5V341M416 338.8H420.4M415.8 343.5H420.6" fill="none" stroke="#e9e5dd" stroke-width="1.3" stroke-linejoin="round" stroke-linecap="round" /><path d="M457 337.3V348.4M466.4 337.3V348.4L459.5 342.8Z" fill="none" stroke="#6a6a6a" stroke-width="1.4" stroke-linejoin="round" stroke-linecap="round" /><path d="M507.4 337.3V348.4L500 342.8Z" fill="none" stroke="#6a6a6a" stroke-width="1.4" stroke-linejoin="round" stroke-linecap="round" /><path d="M899.3 337.3V348.4L906.8 342.8Z" fill="none" stroke="#6a6a6a" stroke-width="1.4" stroke-linejoin="round" stroke-linecap="round" /><path d="M939.6 337.3V348.4L947 342.8ZM950 337.3V348.4" fill="none" stroke="#6a6a6a" stroke-width="1.4" stroke-linejoin="round" stroke-linecap="round" /><path d="M969 332.8V354.2" fill="none" stroke="#8a8a8a" stroke-width="1.4" stroke-linejoin="round" stroke-linecap="round" /><circle cx="992.9" cy="343" r="10.2" fill="none" stroke="#e9e5dd" stroke-width="1.6"/><path d="M997 337.5V348.5L988.3 343Z" fill="none" stroke="#e9e5dd" stroke-width="1.5" stroke-linejoin="round" stroke-linecap="round" /></svg>
<div class="r" style="left:2px;top:363px;width:930px;height:395px;background:#0080d9;border-radius:22px"></div>
<div class="r" style="left:10px;top:371px;width:914px;height:379px;background:#2d2d2d;border-radius:14px;overflow:hidden">
<div class="r" style="left:31.5px;top:0.0px;width:2.0px;height:379.0px;background:#111"></div>
<div class="r" style="left:0.0px;top:39.2px;width:32.0px;height:40.6px;background:#1a4f7b"></div>
<div class="r" style="left:33.5px;top:43.6px;width:501.0px;height:38.4px;background:#3b3b3b"></div>
<div class="r" style="left:33.5px;top:82.0px;width:230.0px;height:2.2px;background:#0a84e8"></div>
<div class="r" style="left:262.8px;top:43.6px;width:2.0px;height:336.0px;background:#5e5e5e"></div>
<div class="r" style="left:385.0px;top:43.6px;width:1.8px;height:336.0px;background:#5e5e5e"></div>
<div class="r" style="left:532.8px;top:43.6px;width:2.0px;height:336.0px;background:#5e5e5e"></div>
<div class="r" style="left:33.5px;top:280.0px;width:501.0px;height:2.0px;background:#6a6a6a"></div>
</div>
<div class="r" style="left:332.5px;top:375.3px;width:382px;height:34.3px;border:1.6px solid #6a6a6a;border-radius:4px;box-sizing:border-box"></div>
<div class="t" id="t26" style="top:382.27px;font-size:22.00px;font-weight:700;color:#fff;left:56.36px;transform:scaleX(0.9420);transform-origin:0 0;">Liste des marquages</div>
<div class="t" id="t27" style="top:384.22px;font-size:16.50px;font-weight:700;color:#fff;left:369.42px;transform:scaleX(0.9803);transform-origin:0 0;">Rechercher</div>
<div class="t" id="t28" style="top:381.17px;font-size:22.00px;font-weight:700;color:#fff;left:771.46px;transform:scaleX(0.9438);transform-origin:0 0;">Liste de filtres</div>
<div class="t" id="t29" style="top:425.82px;font-size:16.50px;font-weight:700;color:#fff;left:79.00px;transform:scaleX(0.9514);transform-origin:0 0;">Objet</div>
<div class="t" id="t30" style="top:425.62px;font-size:16.50px;font-weight:700;color:#fff;left:285.40px;transform:scaleX(0.9949);transform-origin:0 0;">Titre</div>
<div class="t" id="t31" style="top:425.62px;font-size:16.50px;font-weight:700;color:#fff;left:406.80px;transform:scaleX(0.9676);transform-origin:0 0;">Surface</div>
<div class="t" id="t32" style="top:460.42px;font-size:16.50px;font-weight:700;color:#fff;left:77.98px;transform:scaleX(1.0191);transform-origin:0 0;">Plancher type 5 (6)</div>
<div class="t" id="t33" style="top:460.32px;font-size:16.50px;font-weight:700;color:#fff;left:465.70px;transform:scaleX(1.0925);transform-origin:0 0;">7&#8201;770 m²</div>
<div class="t" id="t34" style="top:488.55px;font-size:16.00px;font-weight:400;color:#f2f2f2;left:119.52px;transform:scaleX(1.0754);transform-origin:0 0;">Plancher type 5</div>
<div class="t" id="t35" style="top:488.55px;font-size:16.00px;font-weight:400;color:#f2f2f2;left:276.23px;transform:scaleX(1.0699);transform-origin:0 0;">Pierre</div>
<div class="t" id="t36" style="top:488.55px;font-size:16.00px;font-weight:400;color:#f2f2f2;left:483.01px;transform:scaleX(1.0699);transform-origin:0 0;">670 m²</div>
<div class="t" id="t37" style="top:516.30px;font-size:16.00px;font-weight:400;color:#f2f2f2;left:119.52px;transform:scaleX(1.0754);transform-origin:0 0;">Plancher type 5</div>
<div class="t" id="t38" style="top:516.30px;font-size:16.00px;font-weight:400;color:#f2f2f2;left:276.23px;transform:scaleX(1.0699);transform-origin:0 0;">Pierre</div>
<div class="t" id="t39" style="top:516.30px;font-size:16.00px;font-weight:400;color:#f2f2f2;left:483.01px;transform:scaleX(1.0699);transform-origin:0 0;">861 m²</div>
<div class="t" id="t40" style="top:544.05px;font-size:16.00px;font-weight:400;color:#f2f2f2;left:119.52px;transform:scaleX(1.0754);transform-origin:0 0;">Plancher type 5</div>
<div class="t" id="t41" style="top:544.05px;font-size:16.00px;font-weight:400;color:#f2f2f2;left:276.23px;transform:scaleX(1.0699);transform-origin:0 0;">Pierre</div>
<div class="t" id="t42" style="top:544.05px;font-size:16.00px;font-weight:400;color:#f2f2f2;left:470.06px;transform:scaleX(1.0699);transform-origin:0 0;">2&#8201;410 m²</div>
<div class="t" id="t43" style="top:571.80px;font-size:16.00px;font-weight:400;color:#f2f2f2;left:119.52px;transform:scaleX(1.0754);transform-origin:0 0;">Plancher type 5</div>
<div class="t" id="t44" style="top:571.80px;font-size:16.00px;font-weight:400;color:#f2f2f2;left:276.23px;transform:scaleX(1.0699);transform-origin:0 0;">Pierre</div>
<div class="t" id="t45" style="top:571.80px;font-size:16.00px;font-weight:400;color:#f2f2f2;left:483.01px;transform:scaleX(1.0699);transform-origin:0 0;">671 m²</div>
<div class="t" id="t46" style="top:599.55px;font-size:16.00px;font-weight:400;color:#f2f2f2;left:119.52px;transform:scaleX(1.0754);transform-origin:0 0;">Plancher type 5</div>
<div class="t" id="t47" style="top:599.55px;font-size:16.00px;font-weight:400;color:#f2f2f2;left:276.23px;transform:scaleX(1.0699);transform-origin:0 0;">Pierre</div>
<div class="t" id="t48" style="top:599.55px;font-size:16.00px;font-weight:400;color:#f2f2f2;left:483.01px;transform:scaleX(1.0699);transform-origin:0 0;">861 m²</div>
<div class="t" id="t49" style="top:627.30px;font-size:16.00px;font-weight:400;color:#f2f2f2;left:119.52px;transform:scaleX(1.0754);transform-origin:0 0;">Plancher type 5</div>
<div class="t" id="t50" style="top:627.30px;font-size:16.00px;font-weight:400;color:#f2f2f2;left:276.23px;transform:scaleX(1.0699);transform-origin:0 0;">Pierre</div>
<div class="t" id="t51" style="top:627.30px;font-size:16.00px;font-weight:400;color:#f2f2f2;left:470.06px;transform:scaleX(1.0699);transform-origin:0 0;">2&#8201;295 m²</div>
<div class="t" id="t52" style="top:654.82px;font-size:16.50px;font-weight:700;color:#fff;left:77.98px;transform:scaleX(1.0191);transform-origin:0 0;">Plancher type 4 (5)</div>
<div class="t" id="t53" style="top:654.82px;font-size:16.50px;font-weight:700;color:#fff;left:466.00px;transform:scaleX(1.0879);transform-origin:0 0;">9&#8201;377 m²</div>
<div class="t" id="t54" style="top:683.25px;font-size:16.00px;font-weight:400;color:#f2f2f2;left:119.52px;transform:scaleX(1.0754);transform-origin:0 0;">Plancher type 4</div>
<div class="t" id="t55" style="top:683.25px;font-size:16.00px;font-weight:400;color:#f2f2f2;left:277.60px;transform:scaleX(1.0699);transform-origin:0 0;">Vinyl</div>
<div class="t" id="t56" style="top:683.25px;font-size:16.00px;font-weight:400;color:#f2f2f2;left:470.06px;transform:scaleX(1.0699);transform-origin:0 0;">1&#8201;541 m²</div>
<div class="t" id="t57" style="top:711.00px;font-size:16.00px;font-weight:400;color:#f2f2f2;left:119.52px;transform:scaleX(1.0754);transform-origin:0 0;">Plancher type 4</div>
<div class="t" id="t58" style="top:711.00px;font-size:16.00px;font-weight:400;color:#f2f2f2;left:277.60px;transform:scaleX(1.0699);transform-origin:0 0;">Vinyl</div>
<div class="t" id="t59" style="top:711.00px;font-size:16.00px;font-weight:400;color:#f2f2f2;left:470.06px;transform:scaleX(1.0699);transform-origin:0 0;">3&#8201;540 m²</div>
<div class="t" id="t60" style="top:738.75px;font-size:16.00px;font-weight:400;color:#f2f2f2;left:119.52px;transform:scaleX(1.0754);transform-origin:0 0;">Plancher type 4</div>
<div class="t" id="t61" style="top:738.75px;font-size:16.00px;font-weight:400;color:#f2f2f2;left:277.60px;transform:scaleX(1.0699);transform-origin:0 0;">Vinyl</div>
<div class="t" id="t62" style="top:738.75px;font-size:16.00px;font-weight:400;color:#f2f2f2;left:470.06px;transform:scaleX(1.0699);transform-origin:0 0;">1&#8201;818 m²</div>
<svg style="left:0;top:0" width="1298" height="788" viewBox="0 0 1298 788"><defs><clipPath id="pc"><rect x="0" y="0" width="1298" height="750"/></clipPath></defs><g clip-path="url(#pc)"><path d="M16.2 385.8L19.6 389.2L16.2 392.6M22 385.8L25.4 389.2L22 392.6" fill="none" stroke="#e9e5dd" stroke-width="1.4" stroke-linejoin="round" stroke-linecap="round" /><rect x="11.3" y="422.9" width="2.3" height="2.3" fill="#e9e5dd"/><path d="M17.3 424.0H30" fill="none" stroke="#e9e5dd" stroke-width="1.7" stroke-linejoin="round" stroke-linecap="round" /><rect x="11.3" y="428.7" width="2.3" height="2.3" fill="#e9e5dd"/><path d="M17.3 429.8H30" fill="none" stroke="#e9e5dd" stroke-width="1.7" stroke-linejoin="round" stroke-linecap="round" /><rect x="11.3" y="434.5" width="2.3" height="2.3" fill="#e9e5dd"/><path d="M17.3 435.6H30" fill="none" stroke="#e9e5dd" stroke-width="1.7" stroke-linejoin="round" stroke-linecap="round" /><path d="M273.6 389.6L278.8 394.6L284 389.6" fill="none" stroke="#e9e5dd" stroke-width="1.3" stroke-linejoin="round" stroke-linecap="round" /><path d="M300.5 391.5Q310.5 380 320.8 391.5Q310.5 403 300.5 391.5Z" fill="none" stroke="#e9e5dd" stroke-width="1.4" stroke-linejoin="round" stroke-linecap="round" /><path d="M306.5 393Q306 387.5 311 387.2M314.8 390Q315 395.5 309.8 395.8" fill="none" stroke="#e9e5dd" stroke-width="1.4" stroke-linejoin="round" stroke-linecap="round" /><path d="M301.8 400.4L319.4 382.7" fill="none" stroke="#e9e5dd" stroke-width="1.5" stroke-linejoin="round" stroke-linecap="round" /><circle cx="348.9" cy="390.6" r="5.6" fill="none" stroke="#e9e5dd" stroke-width="1.5"/><path d="M353 394.8L359 400.6" fill="none" stroke="#e9e5dd" stroke-width="1.6" stroke-linejoin="round" stroke-linecap="round" /><path d="M690 385.3L702.7 397.9M702.7 385.3L690 397.9" fill="none" stroke="#e9e5dd" stroke-width="1.5" stroke-linejoin="round" stroke-linecap="round" /><path d="M748.3 384.2H762.7L757 391.5V398.8L753.8 400.2V391.5Z" fill="none" stroke="#e9e5dd" stroke-width="1.5" stroke-linejoin="round" stroke-linecap="round" /><path d="M959.5 388.5V400.5H974.8V388.5M967.1 382V396M963.5 385.5L967.1 382L970.7 385.5" fill="none" stroke="#e9e5dd" stroke-width="1.5" stroke-linejoin="round" stroke-linecap="round" /><path d="M48.9 429.2H61.3V441.1H48.9ZM51.8 435.1H58.4" fill="none" stroke="#e9e5dd" stroke-width="1.4" stroke-linejoin="round" stroke-linecap="round" /><path d="M249.5 432L255 437.8L260.5 432" fill="none" stroke="#e9e5dd" stroke-width="1.3" stroke-linejoin="round" stroke-linecap="round" /><path d="M55.5 467L60.6 472.6L65.7 467" fill="none" stroke="#e9e5dd" stroke-width="1.3" stroke-linejoin="round" stroke-linecap="round" /><path d="M55.5 661.8L60.6 667.2L65.7 661.8" fill="none" stroke="#e9e5dd" stroke-width="1.3" stroke-linejoin="round" stroke-linecap="round" /><path d="M95.3 487.5H116.4M95.3 487.5V508.0" stroke="#7f60c0" stroke-width="1.5" fill="none"/><path d="M97.6 485.3V487.5M101.3 485.3V487.5M105.0 485.3V487.5M108.7 485.3V487.5M112.4 485.3V487.5M116.1 485.3V487.5M93.1 490.1H95.3M93.1 493.6H95.3M93.1 497.1H95.3M93.1 500.6H95.3M93.1 504.1H95.3M93.1 507.6H95.3" stroke="#7f60c0" stroke-width="1.2" fill="none"/><path d="M100.3 500.7L106.7 492.3H116.5V508.5H100.3Z" fill="none" stroke="#e9e5dd" stroke-width="1.5" stroke-linejoin="round" stroke-linecap="round" /><path d="M95.3 515.2H116.4M95.3 515.2V535.8" stroke="#7f60c0" stroke-width="1.5" fill="none"/><path d="M97.6 513.0V515.2M101.3 513.0V515.2M105.0 513.0V515.2M108.7 513.0V515.2M112.4 513.0V515.2M116.1 513.0V515.2M93.1 517.9H95.3M93.1 521.4H95.3M93.1 524.9H95.3M93.1 528.4H95.3M93.1 531.9H95.3M93.1 535.4H95.3" stroke="#7f60c0" stroke-width="1.2" fill="none"/><path d="M100.3 528.5L106.7 520.0H116.5V536.2H100.3Z" fill="none" stroke="#e9e5dd" stroke-width="1.5" stroke-linejoin="round" stroke-linecap="round" /><path d="M95.3 543.0H116.4M95.3 543.0V563.5" stroke="#7f60c0" stroke-width="1.5" fill="none"/><path d="M97.6 540.8V543.0M101.3 540.8V543.0M105.0 540.8V543.0M108.7 540.8V543.0M112.4 540.8V543.0M116.1 540.8V543.0M93.1 545.6H95.3M93.1 549.1H95.3M93.1 552.6H95.3M93.1 556.1H95.3M93.1 559.6H95.3M93.1 563.1H95.3" stroke="#7f60c0" stroke-width="1.2" fill="none"/><path d="M100.3 556.2L106.7 547.8H116.5V564.0H100.3Z" fill="none" stroke="#e9e5dd" stroke-width="1.5" stroke-linejoin="round" stroke-linecap="round" /><path d="M95.3 570.8H116.4M95.3 570.8V591.2" stroke="#7f60c0" stroke-width="1.5" fill="none"/><path d="M97.6 568.5V570.8M101.3 568.5V570.8M105.0 568.5V570.8M108.7 568.5V570.8M112.4 568.5V570.8M116.1 568.5V570.8M93.1 573.4H95.3M93.1 576.9H95.3M93.1 580.4H95.3M93.1 583.9H95.3M93.1 587.4H95.3M93.1 590.9H95.3" stroke="#7f60c0" stroke-width="1.2" fill="none"/><path d="M100.3 584.0L106.7 575.5H116.5V591.8H100.3Z" fill="none" stroke="#e9e5dd" stroke-width="1.5" stroke-linejoin="round" stroke-linecap="round" /><path d="M95.3 598.5H116.4M95.3 598.5V619.0" stroke="#7f60c0" stroke-width="1.5" fill="none"/><path d="M97.6 596.3V598.5M101.3 596.3V598.5M105.0 596.3V598.5M108.7 596.3V598.5M112.4 596.3V598.5M116.1 596.3V598.5M93.1 601.1H95.3M93.1 604.6H95.3M93.1 608.1H95.3M93.1 611.6H95.3M93.1 615.1H95.3M93.1 618.6H95.3" stroke="#7f60c0" stroke-width="1.2" fill="none"/><path d="M100.3 611.7L106.7 603.3H116.5V619.5H100.3Z" fill="none" stroke="#e9e5dd" stroke-width="1.5" stroke-linejoin="round" stroke-linecap="round" /><path d="M95.3 626.2H116.4M95.3 626.2V646.8" stroke="#7f60c0" stroke-width="1.5" fill="none"/><path d="M97.6 624.0V626.2M101.3 624.0V626.2M105.0 624.0V626.2M108.7 624.0V626.2M112.4 624.0V626.2M116.1 624.0V626.2M93.1 628.9H95.3M93.1 632.4H95.3M93.1 635.9H95.3M93.1 639.4H95.3M93.1 642.9H95.3M93.1 646.4H95.3" stroke="#7f60c0" stroke-width="1.2" fill="none"/><path d="M100.3 639.5L106.7 631.0H116.5V647.2H100.3Z" fill="none" stroke="#e9e5dd" stroke-width="1.5" stroke-linejoin="round" stroke-linecap="round" /><path d="M95.3 682.2H116.4M95.3 682.2V702.7" stroke="#7f60c0" stroke-width="1.5" fill="none"/><path d="M97.6 680.0V682.2M101.3 680.0V682.2M105.0 680.0V682.2M108.7 680.0V682.2M112.4 680.0V682.2M116.1 680.0V682.2M93.1 684.8H95.3M93.1 688.3H95.3M93.1 691.8H95.3M93.1 695.3H95.3M93.1 698.8H95.3M93.1 702.3H95.3" stroke="#7f60c0" stroke-width="1.2" fill="none"/><path d="M100.3 695.4L106.7 687.0H116.5V703.2H100.3Z" fill="none" stroke="#e9e5dd" stroke-width="1.5" stroke-linejoin="round" stroke-linecap="round" /><path d="M95.3 710.0H116.4M95.3 710.0V730.5" stroke="#7f60c0" stroke-width="1.5" fill="none"/><path d="M97.6 707.8V710.0M101.3 707.8V710.0M105.0 707.8V710.0M108.7 707.8V710.0M112.4 707.8V710.0M116.1 707.8V710.0M93.1 712.6H95.3M93.1 716.1H95.3M93.1 719.6H95.3M93.1 723.1H95.3M93.1 726.6H95.3M93.1 730.1H95.3" stroke="#7f60c0" stroke-width="1.2" fill="none"/><path d="M100.3 723.2L106.7 714.8H116.5V731.0H100.3Z" fill="none" stroke="#e9e5dd" stroke-width="1.5" stroke-linejoin="round" stroke-linecap="round" /><path d="M95.3 737.7H116.4M95.3 737.7V758.2" stroke="#7f60c0" stroke-width="1.5" fill="none"/><path d="M97.6 735.5V737.7M101.3 735.5V737.7M105.0 735.5V737.7M108.7 735.5V737.7M112.4 735.5V737.7M116.1 735.5V737.7M93.1 740.3H95.3M93.1 743.8H95.3M93.1 747.3H95.3M93.1 750.8H95.3M93.1 754.3H95.3M93.1 757.8H95.3" stroke="#7f60c0" stroke-width="1.2" fill="none"/><path d="M100.3 750.9L106.7 742.5H116.5V758.7H100.3Z" fill="none" stroke="#e9e5dd" stroke-width="1.5" stroke-linejoin="round" stroke-linecap="round" /></g></svg>
<div class="r" style="left:24px;top:750px;width:880px;height:8px;background:#0080d9;"></div>
<div class="r" style="left:545px;top:414px;width:753px;height:374px;background:#0080d9;border-radius:8px 8px 0 8px"></div>
<div class="r" style="left:553px;top:423px;width:736px;height:355px;background:#f0f0f0;overflow:hidden">
<div class="r" style="left:5.0px;top:5.5px;width:128.0px;height:29.0px;background:#fff;border:1px solid #cfcfcf;border-radius:6px;box-sizing:border-box"></div>
<div class="r" style="left:159.7px;top:5.5px;width:107.5px;height:29.0px;background:#fff;border:1px solid #cfcfcf;border-radius:6px;box-sizing:border-box"></div>
<div class="r" style="left:273.7px;top:5.5px;width:480.0px;height:29.0px;background:#fff;border:1px solid #cfcfcf;border-radius:6px;box-sizing:border-box"></div>
<div class="r" style="left:0.0px;top:67.5px;width:736.0px;height:290.0px;background:#fff;"></div>
<div class="r" style="left:28.2px;top:67.7px;width:696.8px;height:48.4px;background:#175a7c;"></div>
<div class="r" style="left:28.2px;top:116.1px;width:696.8px;height:25.5px;background:#c2e5f6;"></div>
<div class="r" style="left:28.2px;top:141.6px;width:696.8px;height:25.5px;background:#fff;"></div>
<div class="r" style="left:28.2px;top:167.1px;width:696.8px;height:25.5px;background:#c2e5f6;"></div>
<div class="r" style="left:28.2px;top:192.5px;width:696.8px;height:25.5px;background:#fff;"></div>
<div class="r" style="left:28.2px;top:218.0px;width:696.8px;height:25.5px;background:#c2e5f6;"></div>
<div class="r" style="left:28.2px;top:243.5px;width:696.8px;height:25.5px;background:#fff;"></div>
<div class="r" style="left:28.2px;top:269.0px;width:696.8px;height:25.5px;background:#c2e5f6;"></div>
<div class="r" style="left:28.2px;top:294.5px;width:696.8px;height:25.5px;background:#fff;"></div>
<div class="r" style="left:28.2px;top:319.9px;width:696.8px;height:25.5px;background:#c2e5f6;"></div>
<div class="r" style="left:28.2px;top:345.4px;width:696.8px;height:25.5px;background:#fff;"></div>
<div class="r" style="left:0.0px;top:34.0px;width:28.2px;height:330.0px;background:#efefef;"></div>
<div class="r" style="left:0.0px;top:34.0px;width:736.0px;height:33.7px;background:#efefef;"></div>
<div class="r" style="left:27.5px;top:67.7px;width:1.0px;height:278.2px;background:#62b4e6;"></div>
<div class="r" style="left:147.5px;top:67.7px;width:1.0px;height:278.2px;background:#62b4e6;"></div>
<div class="r" style="left:309.5px;top:67.7px;width:1.0px;height:278.2px;background:#62b4e6;"></div>
<div class="r" style="left:412.5px;top:67.7px;width:1.0px;height:278.2px;background:#62b4e6;"></div>
<div class="r" style="left:516.5px;top:67.7px;width:1.0px;height:278.2px;background:#62b4e6;"></div>
<div class="r" style="left:620.5px;top:67.7px;width:1.0px;height:278.2px;background:#62b4e6;"></div>
<div class="r" style="left:724.5px;top:67.7px;width:1.0px;height:278.2px;background:#62b4e6;"></div>
<div class="r" style="left:28.2px;top:115.5px;width:696.8px;height:1.0px;background:#62b4e6;"></div>
<div class="r" style="left:28.2px;top:141.5px;width:696.8px;height:1.0px;background:#62b4e6;"></div>
<div class="r" style="left:28.2px;top:166.5px;width:696.8px;height:1.0px;background:#62b4e6;"></div>
<div class="r" style="left:28.2px;top:192.5px;width:696.8px;height:1.0px;background:#62b4e6;"></div>
<div class="r" style="left:28.2px;top:217.5px;width:696.8px;height:1.0px;background:#62b4e6;"></div>
<div class="r" style="left:28.2px;top:242.5px;width:696.8px;height:1.0px;background:#62b4e6;"></div>
<div class="r" style="left:28.2px;top:268.5px;width:696.8px;height:1.0px;background:#62b4e6;"></div>
<div class="r" style="left:28.2px;top:293.5px;width:696.8px;height:1.0px;background:#62b4e6;"></div>
<div class="r" style="left:28.2px;top:319.5px;width:696.8px;height:1.0px;background:#62b4e6;"></div>
<div class="r" style="left:28.2px;top:344.5px;width:696.8px;height:1.0px;background:#62b4e6;"></div>
<div class="r" style="left:27.7px;top:47.0px;width:1.0px;height:20.0px;background:#d8d8d8;"></div>
<div class="r" style="left:147.7px;top:47.0px;width:1.0px;height:20.0px;background:#d8d8d8;"></div>
<div class="r" style="left:309.1px;top:47.0px;width:1.0px;height:20.0px;background:#d8d8d8;"></div>
<div class="r" style="left:412.5px;top:47.0px;width:1.0px;height:20.0px;background:#d8d8d8;"></div>
<div class="r" style="left:516.7px;top:47.0px;width:1.0px;height:20.0px;background:#d8d8d8;"></div>
<div class="r" style="left:620.3px;top:47.0px;width:1.0px;height:20.0px;background:#d8d8d8;"></div>
<div class="r" style="left:724.5px;top:47.0px;width:1.0px;height:20.0px;background:#d8d8d8;"></div>
<div class="r" style="left:0.0px;top:67.0px;width:736.0px;height:1.0px;background:#d0d0d0;"></div>
<div class="r" style="left:0.0px;top:67.2px;width:28.0px;height:1.0px;background:#d8d8d8;"></div>
<div class="r" style="left:0.0px;top:141.1px;width:28.0px;height:1.0px;background:#d8d8d8;"></div>
<div class="r" style="left:0.0px;top:166.6px;width:28.0px;height:1.0px;background:#d8d8d8;"></div>
<div class="r" style="left:0.0px;top:192.0px;width:28.0px;height:1.0px;background:#d8d8d8;"></div>
<div class="r" style="left:0.0px;top:217.5px;width:28.0px;height:1.0px;background:#d8d8d8;"></div>
<div class="r" style="left:0.0px;top:243.0px;width:28.0px;height:1.0px;background:#d8d8d8;"></div>
<div class="r" style="left:0.0px;top:268.5px;width:28.0px;height:1.0px;background:#d8d8d8;"></div>
<div class="r" style="left:0.0px;top:294.0px;width:28.0px;height:1.0px;background:#d8d8d8;"></div>
<div class="r" style="left:0.0px;top:319.4px;width:28.0px;height:1.0px;background:#d8d8d8;"></div>
<div class="r" style="left:0.0px;top:344.9px;width:28.0px;height:1.0px;background:#d8d8d8;"></div>
<div class="r" style="left:0.0px;top:370.4px;width:28.0px;height:1.0px;background:#d8d8d8;"></div>
</div>
<div class="t" id="t63" style="top:436.15px;font-size:16.00px;font-weight:400;color:#222;left:564.01px;transform:scaleX(0.9938);transform-origin:0 0;">B15</div>
<div class="t" id="t64" style="top:472.27px;font-size:15.50px;font-weight:400;color:#333;left:636.00px;">A</div>
<div class="t" id="t65" style="top:472.27px;font-size:15.50px;font-weight:400;color:#333;left:776.70px;">B</div>
<div class="t" id="t66" style="top:472.27px;font-size:15.50px;font-weight:400;color:#333;left:908.60px;">C</div>
<div class="t" id="t67" style="top:472.27px;font-size:15.50px;font-weight:400;color:#333;left:1011.80px;">D</div>
<div class="t" id="t68" style="top:472.27px;font-size:15.50px;font-weight:400;color:#333;left:1116.70px;">E</div>
<div class="t" id="t69" style="top:472.27px;font-size:15.50px;font-weight:400;color:#333;left:1221.00px;">F</div>
<div class="t" id="t70" style="top:520.97px;font-size:15.50px;font-weight:400;color:#444;left:558.80px;">1</div>
<div class="t" id="t71" style="top:546.57px;font-size:15.50px;font-weight:400;color:#444;left:559.80px;">2</div>
<div class="t" id="t72" style="top:572.05px;font-size:15.50px;font-weight:400;color:#444;left:559.80px;">3</div>
<div class="t" id="t73" style="top:597.53px;font-size:15.50px;font-weight:400;color:#444;left:559.80px;">4</div>
<div class="t" id="t74" style="top:623.01px;font-size:15.50px;font-weight:400;color:#444;left:559.80px;">5</div>
<div class="t" id="t75" style="top:648.49px;font-size:15.50px;font-weight:400;color:#444;left:559.80px;">6</div>
<div class="t" id="t76" style="top:673.97px;font-size:15.50px;font-weight:400;color:#444;left:559.80px;">7</div>
<div class="t" id="t77" style="top:699.45px;font-size:15.50px;font-weight:400;color:#444;left:559.80px;">8</div>
<div class="t" id="t78" style="top:724.93px;font-size:15.50px;font-weight:400;color:#444;left:559.80px;">9</div>
<div class="t" id="t79" style="top:750.41px;font-size:15.50px;font-weight:400;color:#444;left:555.60px;">10</div>
<div class="t" id="t80" style="top:773.89px;font-size:15.50px;font-weight:400;color:#444;left:555.60px;">11</div>
<div class="t" id="t81" style="top:509.07px;font-size:15.50px;font-weight:400;color:#fff;left:585.40px;transform:scaleX(1.0758);transform-origin:0 0;">Objet</div>
<div class="t" id="t82" style="top:509.77px;font-size:15.50px;font-weight:400;color:#fff;left:705.40px;transform:scaleX(1.0758);transform-origin:0 0;">Titre</div>
<div class="t" id="t83" style="top:509.67px;font-size:15.50px;font-weight:400;color:#fff;left:866.00px;transform:scaleX(1.0758);transform-origin:0 0;">Surface</div>
<div class="t" id="t84" style="top:496.27px;font-size:15.50px;font-weight:400;color:#fff;left:970.00px;transform:scaleX(1.0758);transform-origin:0 0;">Surface</div>
<div class="t" id="t85" style="top:520.87px;font-size:15.50px;font-weight:400;color:#fff;left:968.92px;transform:scaleX(1.0758);transform-origin:0 0;">Unité</div>
<div class="t" id="t86" style="top:508.57px;font-size:15.50px;font-weight:400;color:#fff;left:1073.12px;transform:scaleX(1.0758);transform-origin:0 0;">Longueur</div>
<div class="t" id="t87" style="top:496.27px;font-size:15.50px;font-weight:400;color:#fff;left:1177.32px;transform:scaleX(1.0758);transform-origin:0 0;">Longueur</div>
<div class="t" id="t88" style="top:520.87px;font-size:15.50px;font-weight:400;color:#fff;left:1177.32px;transform:scaleX(1.0758);transform-origin:0 0;">Unité</div>
<div class="t" id="t89" style="top:546.19px;font-size:15.00px;font-weight:400;color:#111;left:585.40px;transform:scaleX(1.0876);transform-origin:0 0;">A301-00.pdf</div>
<div class="t" id="t90" style="top:546.19px;font-size:15.00px;font-weight:400;color:#111;left:704.34px;transform:scaleX(1.0641);transform-origin:0 0;">Plancher type 5 (6)</div>
<div class="t" id="t91" style="top:546.19px;font-size:15.00px;font-weight:400;color:#111;left:926.08px;transform:scaleX(1.0876);transform-origin:0 0;">7770</div>
<div class="t" id="t92" style="top:546.19px;font-size:15.00px;font-weight:400;color:#111;left:1046.50px;">m<span style="font-size:10px;position:relative;top:-7px;font-weight:700">2</span></div>
<div class="t" id="t93" style="top:546.19px;font-size:15.00px;font-weight:400;color:#111;left:1143.05px;transform:scaleX(1.0876);transform-origin:0 0;">985</div>
<div class="t" id="t94" style="top:546.19px;font-size:15.00px;font-weight:400;color:#111;left:1262.00px;">m</div>
<div class="t" id="t95" style="top:571.67px;font-size:15.00px;font-weight:400;color:#111;left:585.40px;transform:scaleX(1.0876);transform-origin:0 0;">A301-00.pdf</div>
<div class="t" id="t96" style="top:571.67px;font-size:15.00px;font-weight:400;color:#111;left:704.34px;transform:scaleX(1.0641);transform-origin:0 0;">Plancher type 4 (5)</div>
<div class="t" id="t97" style="top:571.67px;font-size:15.00px;font-weight:400;color:#111;left:926.08px;transform:scaleX(1.0876);transform-origin:0 0;">9377</div>
<div class="t" id="t98" style="top:571.67px;font-size:15.00px;font-weight:400;color:#111;left:1046.50px;">m<span style="font-size:10px;position:relative;top:-7px;font-weight:700">2</span></div>
<div class="t" id="t99" style="top:571.67px;font-size:15.00px;font-weight:400;color:#111;left:1143.05px;transform:scaleX(1.0876);transform-origin:0 0;">885</div>
<div class="t" id="t100" style="top:571.67px;font-size:15.00px;font-weight:400;color:#111;left:1262.00px;">m</div>
<div class="t" id="t101" style="top:597.15px;font-size:15.00px;font-weight:400;color:#111;left:585.40px;transform:scaleX(1.0876);transform-origin:0 0;">A301-00.pdf</div>
<div class="t" id="t102" style="top:597.15px;font-size:15.00px;font-weight:400;color:#111;left:704.34px;transform:scaleX(1.0641);transform-origin:0 0;">Plancher type 2 (2)</div>
<div class="t" id="t103" style="top:597.15px;font-size:15.00px;font-weight:400;color:#111;left:917.00px;transform:scaleX(1.0876);transform-origin:0 0;">13268</div>
<div class="t" id="t104" style="top:597.15px;font-size:15.00px;font-weight:400;color:#111;left:1046.50px;">m<span style="font-size:10px;position:relative;top:-7px;font-weight:700">2</span></div>
<div class="t" id="t105" style="top:597.15px;font-size:15.00px;font-weight:400;color:#111;left:1143.05px;transform:scaleX(1.0876);transform-origin:0 0;">564</div>
<div class="t" id="t106" style="top:597.15px;font-size:15.00px;font-weight:400;color:#111;left:1262.00px;">m</div>
<div class="t" id="t107" style="top:622.63px;font-size:15.00px;font-weight:400;color:#111;left:585.40px;transform:scaleX(1.0876);transform-origin:0 0;">A301-00.pdf</div>
<div class="t" id="t108" style="top:622.63px;font-size:15.00px;font-weight:400;color:#111;left:704.34px;transform:scaleX(1.0641);transform-origin:0 0;">Plancher type 1 (45)</div>
<div class="t" id="t109" style="top:622.63px;font-size:15.00px;font-weight:400;color:#111;left:917.00px;transform:scaleX(1.0876);transform-origin:0 0;">69606</div>
<div class="t" id="t110" style="top:622.63px;font-size:15.00px;font-weight:400;color:#111;left:1046.50px;">m<span style="font-size:10px;position:relative;top:-7px;font-weight:700">2</span></div>
<div class="t" id="t111" style="top:622.63px;font-size:15.00px;font-weight:400;color:#111;left:1143.05px;transform:scaleX(1.0876);transform-origin:0 0;">690</div>
<div class="t" id="t112" style="top:622.63px;font-size:15.00px;font-weight:400;color:#111;left:1262.00px;">m</div>
<div class="t" id="t113" style="top:648.11px;font-size:15.00px;font-weight:400;color:#111;left:585.40px;transform:scaleX(1.0876);transform-origin:0 0;">A301-00.pdf</div>
<div class="t" id="t114" style="top:648.11px;font-size:15.00px;font-weight:400;color:#111;left:704.34px;transform:scaleX(1.0641);transform-origin:0 0;">Plafond type 1 (2)</div>
<div class="t" id="t115" style="top:648.11px;font-size:15.00px;font-weight:400;color:#111;left:907.93px;transform:scaleX(1.0876);transform-origin:0 0;">132679</div>
<div class="t" id="t116" style="top:648.11px;font-size:15.00px;font-weight:400;color:#111;left:1046.50px;">m<span style="font-size:10px;position:relative;top:-7px;font-weight:700">2</span></div>
<div class="t" id="t117" style="top:648.11px;font-size:15.00px;font-weight:400;color:#111;left:1143.05px;transform:scaleX(1.0876);transform-origin:0 0;">564</div>
<div class="t" id="t118" style="top:648.11px;font-size:15.00px;font-weight:400;color:#111;left:1262.00px;">m</div>
<div class="t" id="t119" style="top:673.59px;font-size:15.00px;font-weight:400;color:#111;left:585.40px;transform:scaleX(1.0876);transform-origin:0 0;">A301-00.pdf</div>
<div class="t" id="t120" style="top:673.59px;font-size:15.00px;font-weight:400;color:#111;left:704.34px;transform:scaleX(1.0641);transform-origin:0 0;">Plafond type 2 (5)</div>
<div class="t" id="t121" style="top:673.59px;font-size:15.00px;font-weight:400;color:#111;left:926.08px;transform:scaleX(1.0876);transform-origin:0 0;">5727</div>
<div class="t" id="t122" style="top:673.59px;font-size:15.00px;font-weight:400;color:#111;left:1046.50px;">m<span style="font-size:10px;position:relative;top:-7px;font-weight:700">2</span></div>
<div class="t" id="t123" style="top:673.59px;font-size:15.00px;font-weight:400;color:#111;left:1152.13px;transform:scaleX(1.0876);transform-origin:0 0;">66</div>
<div class="t" id="t124" style="top:673.59px;font-size:15.00px;font-weight:400;color:#111;left:1262.00px;">m</div>
<div class="t" id="t125" style="top:699.07px;font-size:15.00px;font-weight:400;color:#111;left:585.40px;transform:scaleX(1.0876);transform-origin:0 0;">A301-00.pdf</div>
<div class="t" id="t126" style="top:699.07px;font-size:15.00px;font-weight:400;color:#111;left:704.34px;transform:scaleX(1.0641);transform-origin:0 0;">Plafond type 3 (40)</div>
<div class="t" id="t127" style="top:699.07px;font-size:15.00px;font-weight:400;color:#111;left:917.00px;transform:scaleX(1.0876);transform-origin:0 0;">63880</div>
<div class="t" id="t128" style="top:699.07px;font-size:15.00px;font-weight:400;color:#111;left:1046.50px;">m<span style="font-size:10px;position:relative;top:-7px;font-weight:700">2</span></div>
<div class="t" id="t129" style="top:699.07px;font-size:15.00px;font-weight:400;color:#111;left:1143.05px;transform:scaleX(1.0876);transform-origin:0 0;">623</div>
<div class="t" id="t130" style="top:699.07px;font-size:15.00px;font-weight:400;color:#111;left:1262.00px;">m</div>
<div class="t" id="t131" style="top:724.55px;font-size:15.00px;font-weight:400;color:#111;left:585.40px;transform:scaleX(1.0876);transform-origin:0 0;">A301-00.pdf</div>
<div class="t" id="t132" style="top:724.55px;font-size:15.00px;font-weight:400;color:#111;left:704.34px;transform:scaleX(1.0641);transform-origin:0 0;">Plafond type 4 (5)</div>
<div class="t" id="t133" style="top:724.55px;font-size:15.00px;font-weight:400;color:#111;left:926.08px;transform:scaleX(1.0876);transform-origin:0 0;">9379</div>
<div class="t" id="t134" style="top:724.55px;font-size:15.00px;font-weight:400;color:#111;left:1046.50px;">m<span style="font-size:10px;position:relative;top:-7px;font-weight:700">2</span></div>
<div class="t" id="t135" style="top:724.55px;font-size:15.00px;font-weight:400;color:#111;left:1152.13px;transform:scaleX(1.0876);transform-origin:0 0;">88</div>
<div class="t" id="t136" style="top:724.55px;font-size:15.00px;font-weight:400;color:#111;left:1262.00px;">m</div>
<div class="t" id="t137" style="top:750.03px;font-size:15.00px;font-weight:400;color:#111;left:585.40px;transform:scaleX(1.0876);transform-origin:0 0;">A301-00.pdf</div>
<div class="t" id="t138" style="top:750.03px;font-size:15.00px;font-weight:400;color:#111;left:704.34px;transform:scaleX(1.0641);transform-origin:0 0;">Plafond type 5 (6)</div>
<div class="t" id="t139" style="top:750.03px;font-size:15.00px;font-weight:400;color:#111;left:926.08px;transform:scaleX(1.0876);transform-origin:0 0;">7771</div>
<div class="t" id="t140" style="top:750.03px;font-size:15.00px;font-weight:400;color:#111;left:1046.50px;">m<span style="font-size:10px;position:relative;top:-7px;font-weight:700">2</span></div>
<div class="t" id="t141" style="top:750.03px;font-size:15.00px;font-weight:400;color:#111;left:1152.13px;transform:scaleX(1.0876);transform-origin:0 0;">98</div>
<div class="t" id="t142" style="top:750.03px;font-size:15.00px;font-weight:400;color:#111;left:1262.00px;">m</div>
<svg style="left:0;top:0" width="1298" height="788" viewBox="0 0 1298 788"><path d="M666.5 441.8L672.6 447.6L678.6 441.8" fill="none" stroke="#222" stroke-width="1.5" stroke-linejoin="round" stroke-linecap="round" /><rect x="698.3" y="436.7" width="2.2" height="2.2" fill="#333"/><rect x="698.3" y="442.3" width="2.2" height="2.2" fill="#333"/><rect x="698.3" y="447.9" width="2.2" height="2.2" fill="#333"/><path d="M721.5 436.2L735.3 449.9M735.3 436.2L721.5 449.9" fill="none" stroke="#a8a8a0" stroke-width="1.3" stroke-linejoin="round" stroke-linecap="round" /><path d="M749.5 443.5L755.5 449.3L768.8 436.3" fill="none" stroke="#a8a8a0" stroke-width="1.3" stroke-linejoin="round" stroke-linecap="round" /><text x="780.5" y="449.8" font-size="19.5" font-style="italic" font-weight="400" font-family="Liberation Serif" fill="#222" letter-spacing="0.8">fx</text><path d="M806 441.2L812 446.8L818 441.2" fill="none" stroke="#777" stroke-width="1.2" stroke-linejoin="round" stroke-linecap="round" /><path d="M577.5 471.5V487H562Z" fill="#d9d9d9"/><rect x="580.6" y="466" width="1.3" height="1.3" fill="#444"/></svg>
<div class="r" style="left:545px;top:778px;width:753px;height:10px;background:#0080d9;border-radius:0 0 0 8px"></div>
<div class="r" style="left:1289px;top:414px;width:9px;height:374px;background:#0080d9;border-radius:0 8px 0 0"></div>
</body></html>
